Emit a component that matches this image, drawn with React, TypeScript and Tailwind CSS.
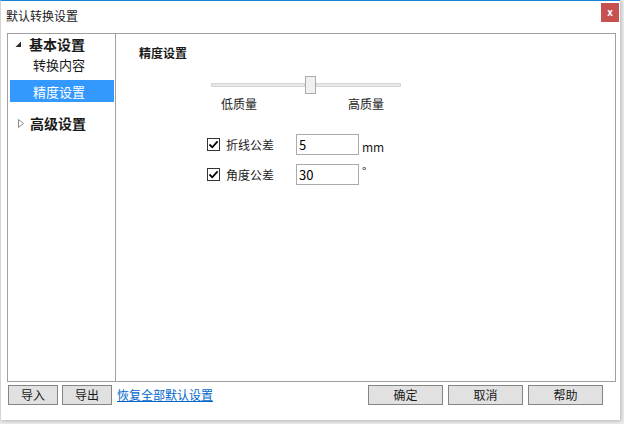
import React from "react";

const font = "font-['Noto_Sans_CJK_SC','Noto_Sans',sans-serif]";

function CheckBox() {
  return (
    <span className="flex h-[13px] w-[13px] items-center justify-center border border-[#333333] bg-white">
      <svg width="11" height="11" viewBox="0 0 11 11">
        <path d="M1.5 5.5 L4.3 8.3 L9.6 2.4" fill="none" stroke="#000" strokeWidth="1.8" />
      </svg>
    </span>
  );
}

function ToleranceRow({ label, value, unit, top }: { label: string; value: string; unit: string; top?: boolean }) {
  return (
    <div className="flex h-[21px] items-center">
      <CheckBox />
      <span className="ml-[6px] w-[70px] text-[12px] leading-[16px] text-[#1a1a1a]">{label}</span>
      <input
        readOnly
        value={value}
        className="h-[21px] w-[63px] border border-[#ababab] bg-white px-[2px] text-[13px] leading-[17px] text-black outline-none"
      />
      <span className={`ml-[3px] text-[12px] leading-[14px] text-[#1a1a1a] ${top ? "self-start" : "mt-[4px]"}`}>{unit}</span>
    </div>
  );
}

function FooterButton({ children, wide }: { children: React.ReactNode; wide?: boolean }) {
  return (
    <button
      type="button"
      className={`flex h-[20px] items-center justify-center border border-[#858585] bg-[#e1e1e1] text-[12px] leading-[16px] text-[#1a1a1a] ${
        wide ? "w-[75px]" : "w-[50px]"
      }`}
    >
      {children}
    </button>
  );
}

export default function App() {
  return (
    <div className={`h-[424px] w-[624px] overflow-hidden bg-[#ededed] ${font}`}>
      <div className="flex h-[420px] w-[620px] flex-col border-t border-l border-t-[#1883d7] border-l-[#d4d4d4] bg-white shadow-[1px_1px_4px_rgba(0,0,0,0.25)]">
        {/* title bar */}
        <div className="flex h-[32px] items-start justify-between">
          <span className="ml-[5px] mt-[7px] text-[12px] leading-[16px] text-[#1a1a1a]">默认转换设置</span>
          <div className="mr-[1px] mt-[2px] flex h-[19px] w-[18px] items-center justify-center bg-[#c75050] pb-[2px] text-[10px] font-bold leading-none text-white">
            x
          </div>
        </div>

        {/* main panel */}
        <div className="ml-[6px] flex h-[349px] w-[609px] border border-[#a0a0a0]">
          {/* tree */}
          <div className="flex w-[108px] flex-col border-r border-[#a0a0a0]">
            <div className="flex h-[20px] items-center">
              <svg className="ml-[7px]" width="7" height="7" viewBox="0 0 7 7">
                <path d="M6 0.5 L6 6 L0.5 6 Z" fill="#2b2b2b" />
              </svg>
              <span className="ml-[7px] text-[14px] font-bold leading-[18px] text-[#1a1a1a]">基本设置</span>
            </div>
            <div className="flex h-[20px] items-center pl-[25px]">
              <span className="text-[13px] leading-[17px] text-[#1a1a1a]">转换内容</span>
            </div>
            <div className="ml-[2px] mr-[1px] mt-[6px] flex h-[22px] items-center bg-[#3399ff] pl-[23px]">
              <span className="text-[13px] leading-[17px] text-white">精度设置</span>
            </div>
            <div className="mt-[11px] flex h-[20px] items-center">
              <svg className="ml-[10px]" width="6" height="9" viewBox="0 0 6 9">
                <path d="M0.5 0.5 L5.5 4.5 L0.5 8.5 Z" fill="none" stroke="#8a8a8a" strokeWidth="1" />
              </svg>
              <span className="ml-[6px] text-[14px] font-bold leading-[18px] text-[#1a1a1a]">高级设置</span>
            </div>
          </div>

          {/* content */}
          <div className="flex flex-1 flex-col">
            <div className="ml-[23px] mt-[11px] text-[12px] font-bold leading-[16px] text-[#1a1a1a]">精度设置</div>

            <div className="ml-[95px] mt-[15px] flex h-[18px] w-[190px] items-center">
              <div className="h-[4px] w-[94px] border border-[#d6d6d6] bg-[#e7e7e7]" />
              <div className="h-[18px] w-[11px] border border-[#acacac] bg-[#f0f0f0]" />
              <div className="h-[4px] flex-1 border border-[#d6d6d6] bg-[#e7e7e7]" />
            </div>
            <div className="ml-[95px] mt-[2px] flex w-[190px] justify-between pl-[10px] pr-[17px] text-[12px] leading-[16px] text-[#1a1a1a]">
              <span>低质量</span>
              <span>高质量</span>
            </div>

            <div className="ml-[91px] mt-[22px] flex flex-col gap-[9px]">
              <ToleranceRow label="折线公差" value="5" unit="mm" />
              <ToleranceRow label="角度公差" value="30" unit="°" top />
            </div>
          </div>
        </div>

        {/* footer */}
        <div className="mt-[3px] flex items-center pl-[7px] pr-[17px]">
          <div className="flex gap-[4px]">
            <FooterButton>导入</FooterButton>
            <FooterButton>导出</FooterButton>
          </div>
          <a className="ml-[5px] text-[12px] leading-[16px] text-[#0066cc] underline">恢复全部默认设置</a>
          <div className="ml-auto flex gap-[5px]">
            <FooterButton wide>确定</FooterButton>
            <FooterButton wide>取消</FooterButton>
            <FooterButton wide>帮助</FooterButton>
          </div>
        </div>
      </div>
    </div>
  );
}
